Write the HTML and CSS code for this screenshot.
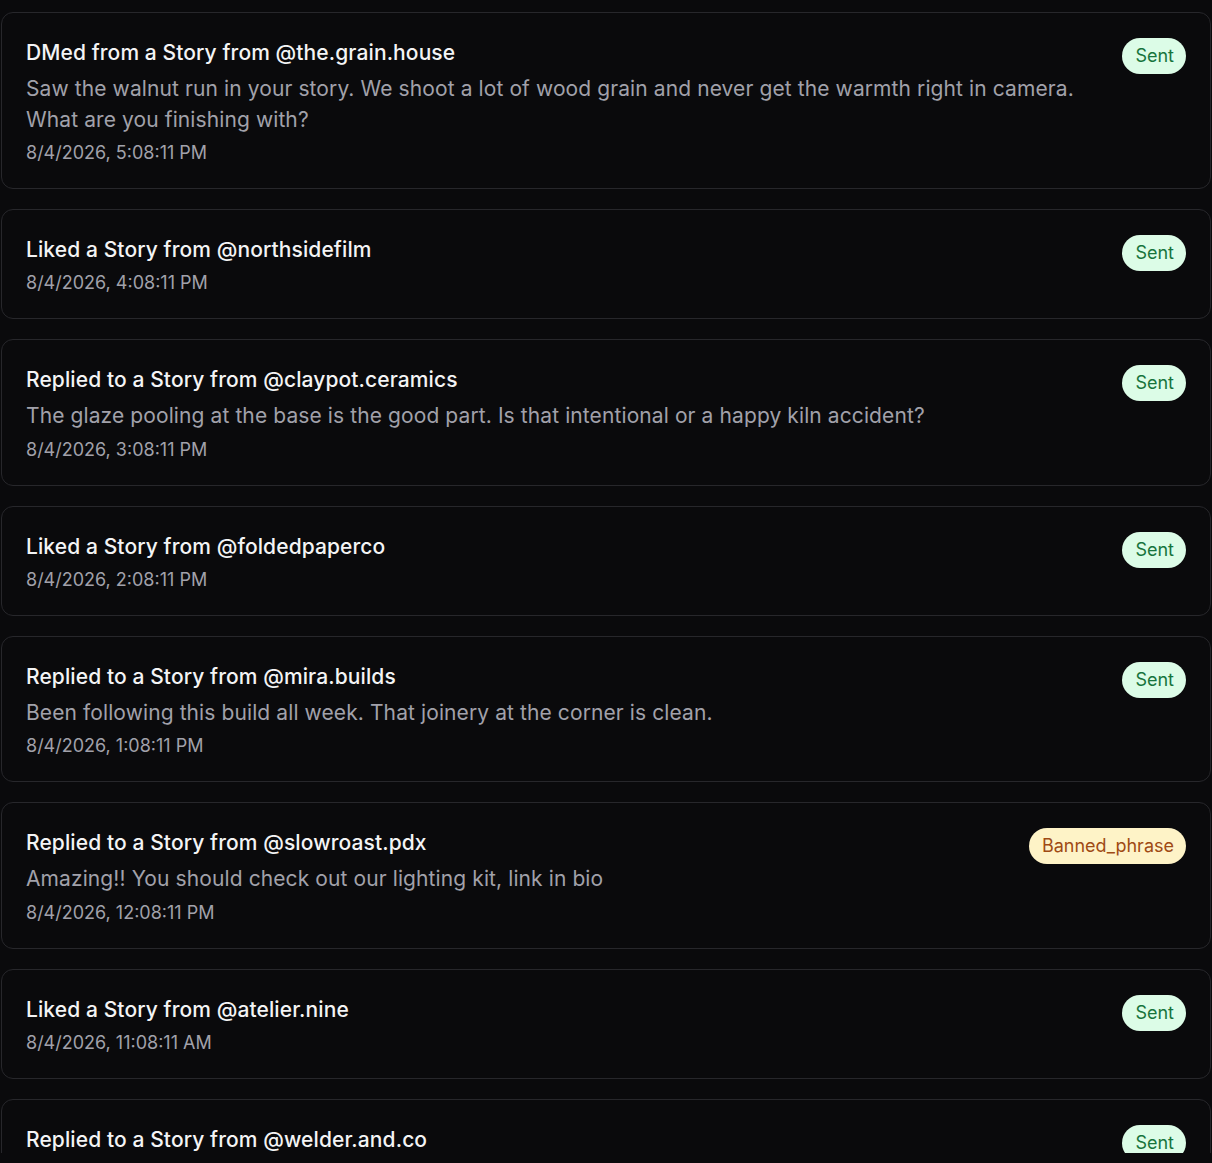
FILE: index.html
```html
<!DOCTYPE html>
<html>
<head>
<meta charset="utf-8">
<link rel="stylesheet" href="styles.css">
</head>
<body>
<div class="viewport">
  <div class="list">
    <div class="card">
      <div class="body">
        <div class="title">DMed from a Story from @the.grain.house</div>
        <div class="desc">Saw the walnut run in your story. We shoot a lot of wood grain and never get the warmth right in camera. What are you finishing with?</div>
        <div class="date">8/4/2026, 5:08:11 PM</div>
      </div>
      <span class="badge sent">Sent</span>
    </div>
    <div class="card">
      <div class="body">
        <div class="title">Liked a Story from @northsidefilm</div>
        <div class="date">8/4/2026, 4:08:11 PM</div>
      </div>
      <span class="badge sent">Sent</span>
    </div>
    <div class="card">
      <div class="body">
        <div class="title">Replied to a Story from @claypot.ceramics</div>
        <div class="desc">The glaze pooling at the base is the good part. Is that intentional or a happy kiln accident?</div>
        <div class="date">8/4/2026, 3:08:11 PM</div>
      </div>
      <span class="badge sent">Sent</span>
    </div>
    <div class="card">
      <div class="body">
        <div class="title">Liked a Story from @foldedpaperco</div>
        <div class="date">8/4/2026, 2:08:11 PM</div>
      </div>
      <span class="badge sent">Sent</span>
    </div>
    <div class="card">
      <div class="body">
        <div class="title">Replied to a Story from @mira.builds</div>
        <div class="desc">Been following this build all week. That joinery at the corner is clean.</div>
        <div class="date">8/4/2026, 1:08:11 PM</div>
      </div>
      <span class="badge sent">Sent</span>
    </div>
    <div class="card">
      <div class="body">
        <div class="title">Replied to a Story from @slowroast.pdx</div>
        <div class="desc">Amazing!! You should check out our lighting kit, link in bio</div>
        <div class="date">8/4/2026, 12:08:11 PM</div>
      </div>
      <span class="badge banned">Banned_phrase</span>
    </div>
    <div class="card">
      <div class="body">
        <div class="title">Liked a Story from @atelier.nine</div>
        <div class="date">8/4/2026, 11:08:11 AM</div>
      </div>
      <span class="badge sent">Sent</span>
    </div>
    <div class="card">
      <div class="body">
        <div class="title">Replied to a Story from @welder.and.co</div>
        <div class="desc">Love seeing the process shots. The bead on that seam is beautiful.</div>
        <div class="date">8/4/2026, 10:08:11 AM</div>
      </div>
      <span class="badge sent">Sent</span>
    </div>
  </div>
</div>
</body>
</html>
```
FILE: styles.css
```css
* { box-sizing: border-box; }
html, body {
  margin: 0;
  padding: 0;
  background: #0a0a0c;
  font-family: Inter, "Noto Sans", sans-serif;
}
.viewport {
  height: 1153px;
  overflow: hidden;
  padding: 12px 1px 0 1px;
}
.list {
  display: flex;
  flex-direction: column;
  gap: 20px;
}
.card {
  display: flex;
  justify-content: space-between;
  align-items: flex-start;
  gap: 24px;
  border: 1px solid #27272b;
  border-radius: 12px;
  background: #0a0a0c;
  padding: 25px 24px 23px 24px;
}
.body {
  display: flex;
  flex-direction: column;
  padding-top: 1px;
}
.title {
  color: #f4f4f5;
  font-size: 21px;
  line-height: 28px;
  font-weight: 500;
  letter-spacing: 0.1px;
  margin-bottom: 7px;
}
.desc {
  color: #a1a1aa;
  font-size: 21px;
  line-height: 30.5px;
  letter-spacing: 0.1px;
  margin-bottom: 6px;
}
.date {
  color: #a1a1aa;
  font-size: 18px;
  line-height: 24px;
}
.badge {
  flex: none;
  font-size: 18px;
  line-height: 24px;
  padding: 6px 12px 6px 13px;
  border-radius: 999px;
}
.badge.sent {
  background: #dcfce7;
  color: #17743c;
}
.badge.banned {
  background: #fef3c7;
  color: #9f4a14;
}
```
